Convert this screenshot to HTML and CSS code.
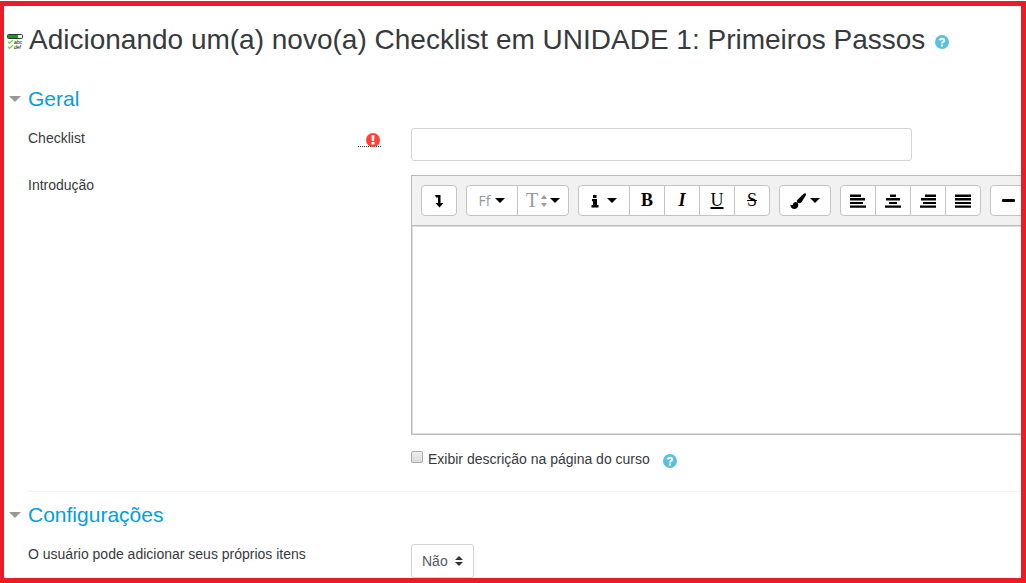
FILE: index.html
```html
<!DOCTYPE html>
<html lang="pt-br">
<head>
	<meta charset="utf-8">
	<title>Checklist</title>
	<link rel="stylesheet" href="styles.css">
</head>

<body>
	<main class="page">
		<header class="page-title">
			<svg class="activity-icon" width="16" height="16" viewBox="0 0 16 16" aria-hidden="true">
				<rect x="0.5" y="0.5" width="15" height="4" rx="1" fill="#fff" stroke="#333"/>
				<rect x="1" y="1" width="10" height="3" fill="#0aa50a"/>
				<path d="M1 8l1.500 1.500L6 6M1 13l1.500 1.500L6 11" fill="none" stroke="#6cd64a" stroke-width="1.200"/>
				<text x="7" y="10" class="tiny">abc</text>
				<text x="7" y="15" class="tiny">def</text>
			</svg>
			<h2>Adicionando um(a) novo(a) Checklist em UNIDADE 1: Primeiros Passos</h2>
			<a class="help" href="#" aria-label="Ajuda">
				<svg width="14" height="14" viewBox="0 0 14 14"><circle cx="7" cy="7" r="7" fill="#5bc0de"/><path d="M4.800 5.400C4.900 3.200 9.300 3.100 9.200 5.500C9.200 7 7.100 6.900 7.100 8.400" fill="none" stroke="#fff" stroke-width="2"/><rect x="6" y="9.500" width="2" height="2" fill="#fff"/></svg>
			</a>
		</header>

		<form>
			<section>
				<h3><a href="#">Geral</a></h3>

				<div class="row">
					<div class="label">
						<label for="name">Checklist</label>
						<abbr class="required" aria-label="Obrigatório">
							<svg width="14" height="14" viewBox="0 0 14 14"><circle cx="7" cy="7" r="7" fill="#ff4136"/><path d="M5.500 2h3l-.4 6H5.900z" fill="#fff"/><rect x="5.500" y="9" width="3" height="2.500" fill="#fff"/></svg>
						</abbr>
					</div>
					<input type="text" id="name" class="text-input">
				</div>

				<div class="row">
					<div class="label"><label for="intro">Introdução</label></div>
					<div>
						<div class="editor">
							<div class="toolbar">
								<div class="group">
									<button type="button" aria-label="Mostrar mais botões"><svg width="10" height="14" viewBox="0 0 10 14"><path d="M1 1h5.500v8H9.500l-4 4.500-4-4.500H4V3.500H2z"/></svg></button>
								</div>
								<div class="group">
									<button type="button" class="menu"><span class="family">Ff</span><i class="caret"></i></button>
									<button type="button" class="menu size"><span class="glyph">T</span><svg width="6" height="12" viewBox="0 0 6 12"><path d="M3 0l3 4H0zM3 12l3-4H0z" fill="#999"/></svg><i class="caret"></i></button>
								</div>
								<div class="group">
									<button type="button" class="menu info" aria-label="Estilos"><svg width="8" height="14" viewBox="0 0 8 14"><path d="M2 1h3.500v3H2zM1 5h5v6h1.500v2.500H.500V11H2V7.200H1z"/></svg><i class="caret"></i></button>
									<button type="button" class="glyph bold">B</button>
									<button type="button" class="glyph italic">I</button>
									<button type="button" class="glyph underline">U</button>
									<button type="button" class="glyph strike">S</button>
								</div>
								<div class="group">
									<button type="button" class="menu brush" aria-label="Cor"><svg width="17" height="16" viewBox="0 0 17 16"><path d="M15 .3c1 .1 1.500 1 1 1.800L11.500 9.200C10.300 10.500 8.800 10.700 7.500 9.500 6.500 8.500 6.700 7.300 8 6.300L13.500 1c.5-.5 1-.7 1.500-.7zM5.700 9c1.600 0 2.700 1.200 2.600 2.900C8.200 14.300 6.500 16 4 16 1.400 16 .4 13.700.4 11.600c1 .7 1.800 1 2.300.2C3.300 10 4 9 5.700 9z"/></svg><i class="caret"></i></button>
								</div>
								<div class="group">
									<button type="button" aria-label="Alinhar à esquerda"><svg width="16" height="14" viewBox="0 0 16 14"><path d="M0 .500h11V3H0zM0 4h15v2.500H0zM0 8h13v2H0zM0 11.500h16v2.200H0z"/></svg></button>
									<button type="button" aria-label="Centralizar"><svg width="16" height="14" viewBox="0 0 16 14"><path d="M5 .500h6V3H5zM1 4h14v2.500H1zM4 8h8v2H4zM0 11.500h16v2.200H0z"/></svg></button>
									<button type="button" aria-label="Alinhar à direita"><svg width="16" height="14" viewBox="0 0 16 14"><path d="M5 .500h11V3H5zM1 4h15v2.500H1zM3 8h13v2H3zM0 11.500h16v2.200H0z"/></svg></button>
									<button type="button" aria-label="Justificar"><svg width="16" height="14" viewBox="0 0 16 14"><path d="M0 .500h16V3H0zM0 4h16v2.500H0zM0 8h16v2H0zM0 11.500h16v2.200H0z"/></svg></button>
								</div>
								<div class="group">
									<button type="button" aria-label="Linha horizontal"><svg width="14" height="14" viewBox="0 0 14 14"><rect x="1" y="5" width="13" height="3" rx="1"/></svg></button>
								</div>
							</div>
							<textarea id="intro"></textarea>
						</div>
						<div class="check">
							<input type="checkbox" id="show">
							<label for="show">Exibir descrição na página do curso</label>
							<a class="help" href="#" aria-label="Ajuda">
								<svg width="14" height="14" viewBox="0 0 14 14"><circle cx="7" cy="7" r="7" fill="#5bc0de"/><path d="M4.800 5.400C4.900 3.200 9.300 3.100 9.200 5.500C9.200 7 7.100 6.900 7.100 8.400" fill="none" stroke="#fff" stroke-width="2"/><rect x="6" y="9.500" width="2" height="2" fill="#fff"/></svg>
							</a>
						</div>
					</div>
				</div>
			</section>

			<section>
				<h3><a href="#">Configurações</a></h3>

				<div class="row">
					<div class="label"><label for="own">O usuário pode adicionar seus próprios itens</label></div>
					<div class="select">
						<select id="own">
							<option>Não</option>
							<option>Sim</option>
						</select>
						<svg width="8" height="10" viewBox="0 0 8 10"><path d="M4 0l4 4H0zM4 10l4-4H0z" fill="#333"/></svg>
					</div>
				</div>
			</section>
		</form>
	</main>
</body>
</html>
```

FILE: styles.css
```css
* {
	box-sizing: border-box;
}

body {
	margin: 0;
	padding-top: 1px;
	background: #fff;
	color: #373a3c;
	font-family: "Liberation Sans", Arial, sans-serif;
	font-size: 14px;
	line-height: 20px;
}

.page {
	height: calc(100vh - 1px);
	border: 5px solid #ed1c24;
	border-left-width: 4px;
	padding: 14px 0 0 3px;
	overflow: hidden;
}

svg {
	display: block;
	flex: none;
}

.page-title {
	display: flex;
	align-items: center;
	gap: 6px;
	height: 40px;
}

.page-title h2 {
	margin: 0;
	font-size: 28px;
	font-weight: normal;
	line-height: 40px;
	white-space: nowrap;
}

.page-title .help {
	margin-left: 4px;
	padding-top: 4px;
}

.activity-icon {
	margin-top: 4px;
}

.tiny {
	font-size: 5px;
	font-style: italic;
}

section {
	margin-left: 21px;
	padding-top: 8px;
}

section + section {
	border-top: 1px solid #f2f2f2;
}

.page-title + form {
	padding-top: 16px;
}

h3 {
	display: flex;
	align-items: center;
	margin: 0 0 14px -19px;
	font-size: 21px;
	font-weight: normal;
	line-height: 30px;
}

h3::before {
	content: "";
	margin-right: 7px;
	border: 6px solid transparent;
	border-top-color: #999;
	border-bottom: 0;
}

h3 a {
	color: #009fdb;
	text-decoration: none;
}

.row {
	display: grid;
	grid-template-columns: 383px 1fr;
	margin-bottom: 14px;
}

.label {
	display: flex;
	justify-content: space-between;
	align-items: flex-start;
	padding-right: 30px;
}

.required {
	height: 14px;
	margin-top: 5px;
	padding: 0 1px 0 8px;
	border-bottom: 1px dotted #373a3c;
}

.text-input {
	width: 501px;
	max-width: 100%;
	height: 33px;
	border: 1px solid #d4d4d4;
	border-radius: 3px;
}

.editor {
	border: 1px solid #bbb;
	border-right: 0;
}

.toolbar {
	display: flex;
	gap: 9px;
	padding: 9px;
	border-bottom: 1px solid #bbb;
	background: #f1f1f1;
	overflow: hidden;
}

.group {
	display: flex;
	flex: none;
	border: 1px solid #c4c4c4;
	border-radius: 4px;
	background: #fff;
}

.toolbar button {
	display: flex;
	align-items: center;
	justify-content: center;
	width: 34px;
	height: 29px;
	padding: 0;
	border: 0;
	background: none;
	color: #000;
	font-size: 14px;
}

.toolbar button + button {
	width: 35px;
	border-left: 1px solid #c4c4c4;
}

.toolbar .menu {
	gap: 5px;
	width: 50px;
}

.toolbar .menu + .menu {
	width: 51px;
}

.toolbar .size,
.toolbar .brush {
	gap: 3px;
}

.toolbar .info {
	gap: 8px;
}

.caret {
	border: 5px solid transparent;
	border-top-color: #000;
	border-bottom: 0;
}

.family {
	color: #999;
	font-family: "Open Sans", sans-serif;
}

.toolbar .glyph {
	font-family: "Liberation Serif", serif;
	font-size: 20px;
}

.size .glyph {
	color: #999;
}

.toolbar .bold,
.toolbar .italic,
.toolbar .underline,
.toolbar .strike {
	font-size: 18px;
}

.toolbar .bold,
.toolbar .italic {
	font-weight: bold;
}

.toolbar .italic {
	font-style: italic;
}

.toolbar .underline {
	text-decoration: underline 2px;
}

.toolbar .strike {
	text-decoration: line-through;
}

textarea {
	display: block;
	width: 100%;
	height: 208px;
	border: 1px solid #ddd;
	border-right: 0;
	resize: none;
}

.check {
	display: flex;
	align-items: center;
	height: 20px;
	margin: 14px 0 8px;
}

.check input {
	appearance: none;
	width: 12px;
	height: 12px;
	margin: 0 5px 4px 0;
	border: 1px solid #aaa;
	border-radius: 2px;
	background: linear-gradient(#eee, #ddd);
}

.check .help {
	margin-left: 13px;
	padding-top: 4px;
}

.select {
	position: relative;
	justify-self: start;
}

.select select {
	appearance: none;
	display: block;
	width: 63px;
	height: 34px;
	padding: 0 10px;
	border: 1px solid #d4d4d4;
	border-radius: 3px;
	background: #fff;
	color: #55595c;
	font: inherit;
}

.select svg {
	position: absolute;
	top: 12px;
	right: 11px;
	pointer-events: none;
}
```
